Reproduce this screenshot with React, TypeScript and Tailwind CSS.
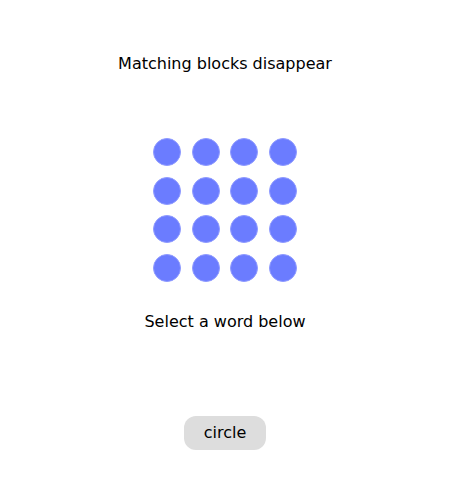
import React from 'react';

const font = { fontFamily: '"DejaVu Sans", sans-serif' };

export default function App() {
  const dots = Array.from({ length: 16 });

  return (
    <div className="w-[450px] h-[500px] bg-white text-black flex flex-col items-center" style={font}>
      <p className="mt-[54px] text-[16px] leading-[19px]">Matching blocks disappear</p>

      <div className="mt-[65px] grid grid-cols-4 gap-[10.5px]">
        {dots.map((_, i) => (
          <div
            key={i}
            className="w-[28px] h-[28px] rounded-full bg-[#6b7cff] border border-[#8f9bff]"
          />
        ))}
      </div>

      <p className="mt-[30px] text-[16px] leading-[19px]">Select a word below</p>

      <button className="mt-[85px] w-[82px] h-[34px] rounded-[12px] bg-[#dddddd] text-[16px] leading-[19px]">
        circle
      </button>
    </div>
  );
}
